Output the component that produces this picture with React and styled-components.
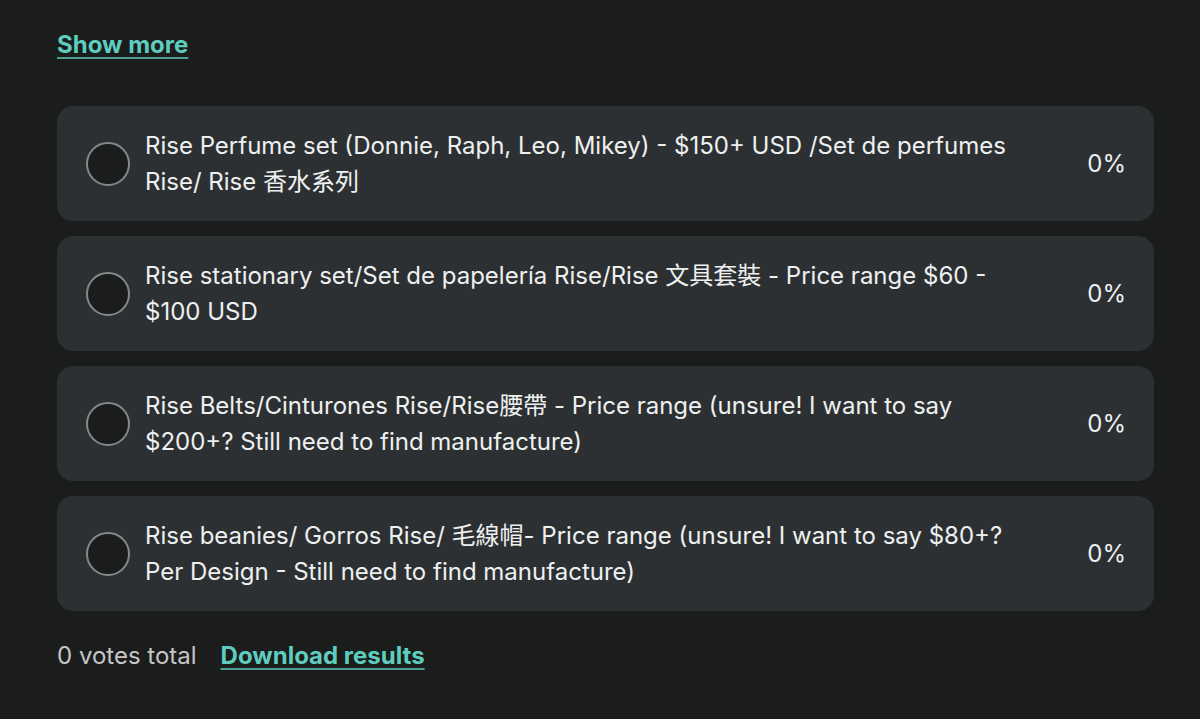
import React from 'react';
import styled, { createGlobalStyle } from 'styled-components';

const GlobalStyle = createGlobalStyle`
  html, body {
    margin: 0;
    padding: 0;
    background: #1b1c1c;
  }
  body {
    font-family: Inter, "Noto Sans", "Noto Sans CJK TC", sans-serif;
    color: #e7e9ea;
  }
`

const Page = styled.div`
  width: 1200px;
  height: 719px;
  box-sizing: border-box;
  padding: 30px 46px 0 57px;
  overflow: hidden;
`

const Link = styled.a`
  color: #5ecdbf;
  font-weight: 700;
  font-size: 24px;
  text-decoration: underline;
  text-decoration-thickness: 2px;
  text-underline-offset: 4px;
  text-decoration-color: #4a9f95;
  cursor: pointer;
`

const Options = styled.div`
  display: flex;
  flex-direction: column;
  gap: 15px;
  margin-top: 47px;
`

const Option = styled.div`
  display: flex;
  align-items: center;
  height: 115px;
  box-sizing: border-box;
  padding: 0 28px 0 29px;
  background: #2d3032;
  border-radius: 16px;
`

const Radio = styled.div`
  width: 44px;
  height: 44px;
  box-sizing: border-box;
  flex: none;
  border-radius: 50%;
  border: 2px solid #86898b;
  background: #1b1c1c;
  margin-right: 15px;
`

const Label = styled.div`
  flex: 1;
  font-size: 24px;
  line-height: 36px;
  color: #eef0f0;
  padding-right: 60px;
`

const Percent = styled.div`
  font-size: 24px;
  color: #eef0f0;
  flex: none;
`

const Footer = styled.div`
  display: flex;
  align-items: baseline;
  gap: 24px;
  margin-top: 30px;
`

const Total = styled.span`
  font-size: 24px;
  color: #c4c6c7;
`

const options = [
  'Rise Perfume set (Donnie, Raph, Leo, Mikey) - $150+ USD /Set de perfumes Rise/ Rise 香水系列',
  'Rise stationary set/Set de papelería Rise/Rise 文具套裝 - Price range $60 - $100 USD',
  'Rise Belts/Cinturones Rise/Rise腰帶 - Price range (unsure! I want to say $200+? Still need to find manufacture)',
  'Rise beanies/ Gorros Rise/ 毛線帽- Price range (unsure! I want to say $80+? Per Design - Still need to find manufacture)',
];

const App = () => {
    return (
        <Page>
            <GlobalStyle />
            <Link>Show more</Link>
            <Options>
                {options.map((text, key) =>
                    <Option key={key}>
                        <Radio />
                        <Label>{text}</Label>
                        <Percent>0%</Percent>
                    </Option>
                )}
            </Options>
            <Footer>
                <Total>0 votes total</Total>
                <Link>Download results</Link>
            </Footer>
        </Page>
    );
}
export default App;
